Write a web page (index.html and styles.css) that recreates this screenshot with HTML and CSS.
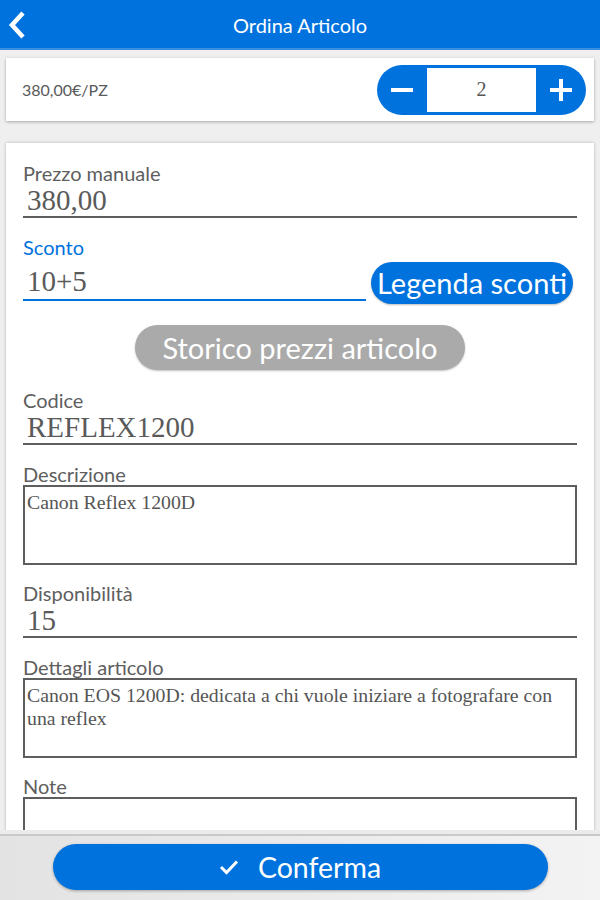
FILE: index.html
```html
<!DOCTYPE html>
<html lang="it">
<head>
    <meta charset="UTF-8">
    <meta name="viewport" content="width=device-width, initial-scale=1.0">
    <title>Ordina Articolo</title>
    <link rel="stylesheet" href="styles.css">
</head>
<body>
    <div class="app">
        <!-- Header -->
        <div class="topbar">
            <a href="#" class="back-btn">
                <svg width="20" height="30" viewBox="0 0 20 30"><path d="M15 3 L4 15 L15 27" fill="none" stroke="#fff" stroke-width="4.5"/></svg>
            </a>
            <h1 class="topbar-title">Ordina Articolo</h1>
        </div>

        <div class="content">
            <!-- Prezzo / quantita -->
            <div class="price-card">
                <span class="unit-price">380,00€/PZ</span>
                <div class="stepper">
                    <button type="button" class="step-btn">
                        <svg width="24" height="24" viewBox="0 0 24 24"><path d="M1 12 H23" stroke="#fff" stroke-width="4"/></svg>
                    </button>
                    <input type="text" class="step-value" value="2">
                    <button type="button" class="step-btn">
                        <svg width="24" height="24" viewBox="0 0 24 24"><path d="M1 12 H23 M12 1 V23" stroke="#fff" stroke-width="4"/></svg>
                    </button>
                </div>
            </div>

            <!-- Dettaglio ordine -->
            <div class="form-card">
                <div class="field">
                    <label class="field-label">Prezzo manuale</label>
                    <input type="text" class="line-input" value="380,00">
                </div>

                <div class="field">
                    <label class="field-label active">Sconto</label>
                    <div class="discount-row">
                        <input type="text" class="line-input active" value="10+5">
                        <button type="button" class="pill-btn">Legenda sconti</button>
                    </div>
                </div>

                <div class="field center">
                    <button type="button" class="pill-btn grey">Storico prezzi articolo</button>
                </div>

                <div class="field">
                    <label class="field-label">Codice</label>
                    <input type="text" class="line-input" value="REFLEX1200">
                </div>

                <div class="field box">
                    <label class="field-label">Descrizione</label>
                    <textarea class="box-input">Canon Reflex 1200D</textarea>
                </div>

                <div class="field">
                    <label class="field-label">Disponibilità</label>
                    <input type="text" class="line-input" value="15">
                </div>

                <div class="field box">
                    <label class="field-label">Dettagli articolo</label>
                    <textarea class="box-input">Canon EOS 1200D: dedicata a chi vuole iniziare a fotografare con una reflex</textarea>
                </div>

                <div class="field box">
                    <label class="field-label">Note</label>
                    <textarea class="box-input"></textarea>
                </div>
            </div>
        </div>

        <!-- Footer -->
        <div class="footer">
            <button type="button" class="confirm-btn">
                <svg width="20" height="16" viewBox="0 0 20 16"><path d="M2 8 L7.5 13.5 L18 2.5" fill="none" stroke="#fff" stroke-width="3"/></svg>
                Conferma
            </button>
        </div>
    </div>
</body>
</html>
```

FILE: styles.css
```css
* { box-sizing: border-box; }
body { margin: 0; background: #efefef; font-family: Lato, "Open Sans", sans-serif; }
.app { height: 900px; display: flex; flex-direction: column; }

.topbar { height: 50px; background: #0072de; border-bottom: 2px solid #3a8fe0; display: flex; align-items: center; justify-content: center; position: relative; flex-shrink: 0; }
.back-btn { position: absolute; left: 8px; top: 10px; display: block; }
.topbar-title { margin: 0 0 -2px; color: #fff; font-size: 20px; font-weight: normal; }

.content { flex: 1; overflow: hidden; padding: 8px 6px 0; }

.price-card { height: 63px; background: #fff; box-shadow: 0 1px 3px rgba(0,0,0,.3); display: flex; align-items: center; justify-content: space-between; padding: 0 8px 0 16px; }
.unit-price { font-size: 16px; color: #5a5a5a; }
.stepper { width: 209px; height: 50px; background: #0072de; border-radius: 25px; display: flex; align-items: center; padding: 3px 0; }
.step-btn { width: 50px; height: 44px; border: none; background: none; padding: 0; display: flex; align-items: center; justify-content: center; }
.step-value { width: 109px; height: 44px; border: none; outline: none; text-align: center; font-family: "Liberation Serif", serif; font-size: 20px; color: #555; }

.form-card { margin-top: 22px; background: #fff; box-shadow: 0 0 3px rgba(0,0,0,.25); padding: 19px 17px 20px; }
.field { margin-bottom: 18px; }
.field.box { margin-bottom: 17px; }
.field.center { text-align: center; margin-bottom: 19px; }
.field-label { display: block; font-size: 20px; line-height: 22px; color: #5e5e5e; }
.field-label.active { color: #0072de; }

.line-input { display: block; width: 100%; height: 34px; border: none; border-bottom: 2px solid #5e5e5e; outline: none; padding: 0 4px; font-family: "Liberation Serif", serif; font-size: 29px; color: #5a5a5a; background: none; }
.line-input.active { border-bottom-color: #0072de; }

.discount-row { display: flex; align-items: center; gap: 5px; height: 49px; padding-right: 4px; }
.discount-row .line-input { flex: 1; height: 36px; }

.pill-btn { height: 42px; border: none; border-radius: 21px; background: #0072de; color: #fff; font-family: Lato, sans-serif; font-size: 29px; padding: 0 6px; box-shadow: 0 1px 2px rgba(0,0,0,.25); white-space: nowrap; }
.pill-btn.grey { background: #aaaaaa; height: 45px; border-radius: 23px; padding: 0 27px; }

.box-input { display: block; width: 100%; height: 80px; border: 2px solid #5e5e5e; outline: none; resize: none; padding: 4px 2px; font-family: "Liberation Serif", serif; font-size: 19.8px; line-height: 23px; color: #555; overflow: hidden; }

.footer { height: 70px; flex-shrink: 0; display: flex; justify-content: center; align-items: flex-start; padding-top: 14px;
  background: linear-gradient(to bottom, #ebebeb 0 4px, #c9c9c9 4px 6px, transparent 6px), linear-gradient(to right, #e3e3e3, #f3f3f3); }
.confirm-btn { width: 495px; height: 46px; border: none; border-radius: 23px; background: #0072de; color: #fff; font-family: Lato, sans-serif; font-size: 28.5px; display: flex; align-items: center; justify-content: center; gap: 19px; box-shadow: 0 1px 3px rgba(0,0,0,.3); }
```
